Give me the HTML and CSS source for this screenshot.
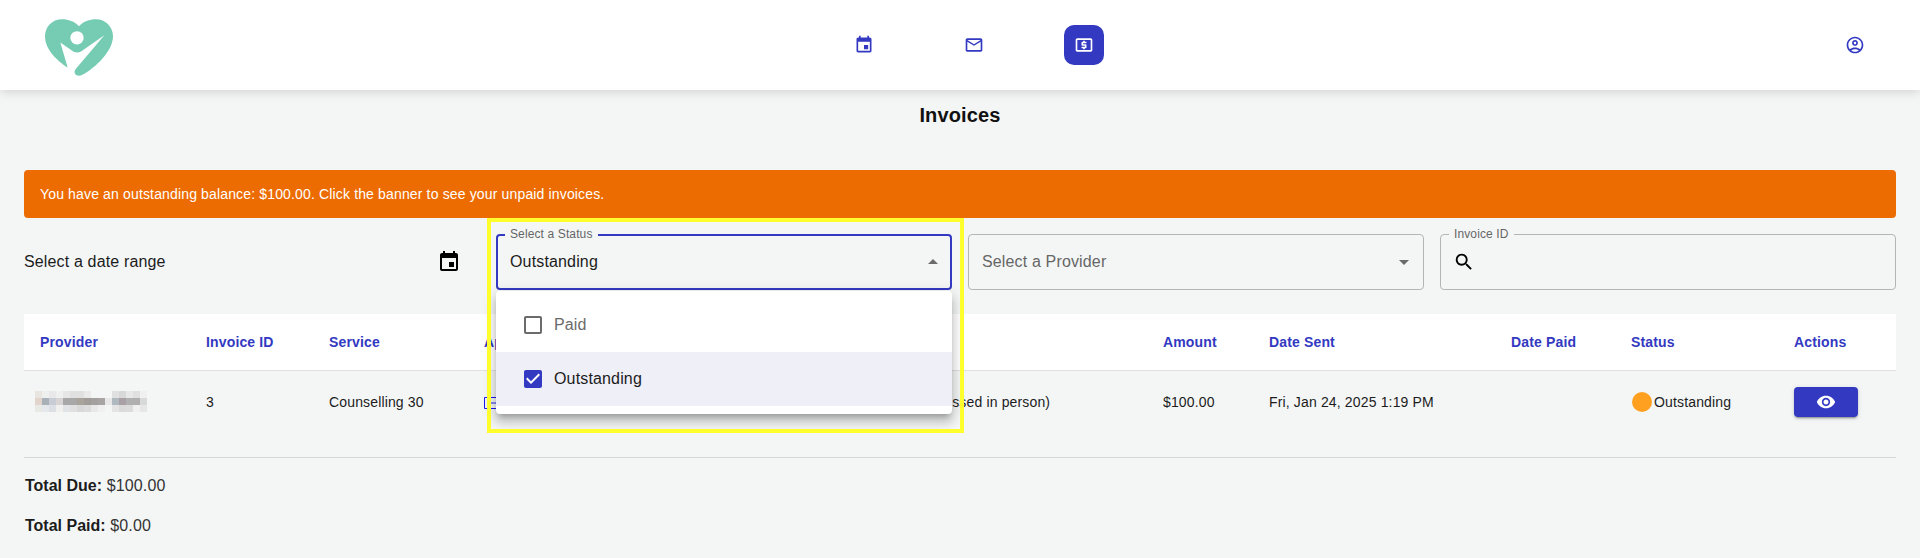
FILE: index.html
```html
<!DOCTYPE html>
<html lang="en">
<head>
<meta charset="utf-8">
<title>Invoices</title>
<link rel="stylesheet" href="styles.css">
</head>
<body>
<header class="topbar">
  <svg class="logo" viewBox="44 27 204 170" aria-label="Logo"><path fill="#76ccb3" d="M112 172C78 150 44 116 44 78C44 50 65 27 95 27C115 27 132 33 146 48C160 33 177 27 197 27C226 27 248 50 248 78C248 122 196 172 156 194C146 199 135 197 133 188C132 182 135 177 140 172L222 75L152 124C146 128 136 128 130 125L90 97Z"/><circle cx="140" cy="83" r="20" fill="#fff"/></svg>
  <nav class="nav">
    <span class="nav-btn"><svg class="icon20" viewBox="0 0 24 24"><path d="M17 12h-5v5h5v-5zM16 1v2H8V1H6v2H5c-1.11 0-1.99.9-1.99 2L3 19c0 1.1.89 2 2 2h14c1.1 0 2-.9 2-2V5c0-1.1-.9-2-2-2h-1V1h-2zm3 18H5V8h14v11z"/></svg></span>
    <span class="nav-btn"><svg class="icon20" viewBox="0 0 24 24"><path d="M20 4H4c-1.1 0-1.99.9-1.99 2L2 18c0 1.1.9 2 2 2h16c1.1 0 2-.9 2-2V6c0-1.1-.9-2-2-2zm0 14H4V8l8 5 8-5v10zm-8-7L4 6h16l-8 5z"/></svg></span>
    <span class="nav-btn nav-btn-active"><svg class="icon20" viewBox="0 0 24 24"><path d="M11 17h2v-1h1c.55 0 1-.45 1-1v-3c0-.55-.45-1-1-1h-3v-1h4V8h-2V7h-2v1h-1c-.55 0-1 .45-1 1v3c0 .55.45 1 1 1h3v1H9v2h2v1zm9-13H4c-1.11 0-1.99.89-1.99 2L2 18c0 1.11.89 2 2 2h16c1.11 0 2-.89 2-2V6c0-1.11-.89-2-2-2zm0 14H4V6h16v12z"/></svg></span>
  </nav>
  <span class="nav-btn"><svg class="icon20" viewBox="0 0 24 24"><path d="M12 2C6.48 2 2 6.48 2 12s4.48 10 10 10 10-4.48 10-10S17.52 2 12 2zM7.35 18.5C8.66 17.56 10.26 17 12 17s3.34.56 4.65 1.5c-1.31.94-2.91 1.5-4.65 1.5s-3.34-.56-4.65-1.5zm10.79-1.38C16.45 15.8 14.32 15 12 15s-4.45.8-6.14 2.12C4.7 15.73 4 13.95 4 12c0-4.42 3.58-8 8-8s8 3.58 8 8c0 1.95-.7 3.73-1.86 5.12zM12 6c-1.93 0-3.5 1.57-3.5 3.5S10.07 13 12 13s3.5-1.57 3.5-3.5S13.93 6 12 6zm0 5c-.83 0-1.5-.67-1.5-1.5S11.17 8 12 8s1.5.67 1.5 1.5S12.83 11 12 11z"/></svg></span>
</header>

<main class="page">
  <h1 class="title">Invoices</h1>
  <div class="banner">You have an outstanding balance: $100.00. Click the banner to see your unpaid invoices.</div>

  <section class="filters">
    <div class="date-range">
      <span>Select a date range</span>
      <svg class="icon24 icon-black" viewBox="0 0 24 24"><path d="M17 12h-5v5h5v-5zM16 1v2H8V1H6v2H5c-1.11 0-1.99.9-1.99 2L3 19c0 1.1.89 2 2 2h14c1.1 0 2-.9 2-2V5c0-1.1-.9-2-2-2h-1V1h-2zm3 18H5V8h14v11z"/></svg>
    </div>

    <div class="field field-focused">
      <span class="field-label">Select a Status</span>
      <span class="field-value">Outstanding</span>
      <svg class="icon24 icon-grey" viewBox="0 0 24 24"><path d="M7 14l5-5 5 5z"/></svg>
      <div class="menu">
        <div class="menu-item menu-item-muted">
          <svg class="icon24 icon-grey" viewBox="0 0 24 24"><path d="M19 5v14H5V5h14m0-2H5c-1.1 0-2 .9-2 2v14c0 1.1.9 2 2 2h14c1.1 0 2-.9 2-2V5c0-1.1-.9-2-2-2z"/></svg>
          <span>Paid</span>
        </div>
        <div class="menu-item menu-item-selected">
          <svg class="icon24 icon-primary" viewBox="0 0 24 24"><rect x="6" y="6" width="12" height="12" fill="#fff"/><path d="M19 3H5c-1.11 0-2 .9-2 2v14c0 1.1.89 2 2 2h14c1.11 0 2-.9 2-2V5c0-1.1-.89-2-2-2zm-9 14l-5-5 1.41-1.41L10 14.17l7.59-7.59L19 8l-9 9z"/></svg>
          <span>Outstanding</span>
        </div>
      </div>
      <div class="highlight"></div>
    </div>

    <div class="field">
      <span class="field-placeholder">Select a Provider</span>
      <svg class="icon24 icon-grey" viewBox="0 0 24 24"><path d="M7 10l5 5 5-5z"/></svg>
    </div>

    <div class="field field-search">
      <span class="field-label">Invoice ID</span>
      <svg class="icon22 icon-black" viewBox="0 0 24 24"><path d="M15.5 14h-.79l-.28-.27C15.41 12.59 16 11.11 16 9.5 16 5.91 13.09 3 9.5 3S3 5.91 3 9.5 5.91 16 9.5 16c1.61 0 3.09-.59 4.23-1.57l.27.28v.79l5 4.99L20.49 19l-4.99-5zm-6 0C7.01 14 5 11.99 5 9.5S7.01 5 9.5 5 14 7.01 14 9.5 11.99 14 9.5 14z"/></svg>
    </div>
  </section>

  <table class="invoices">
    <colgroup>
      <col class="c-provider"><col class="c-id"><col class="c-service"><col class="c-notes"><col class="c-amount"><col class="c-sent"><col class="c-paid"><col class="c-status"><col class="c-actions">
    </colgroup>
    <thead>
      <tr>
        <th>Provider</th><th>Invoice ID</th><th>Service</th><th>Appointment Details</th><th>Amount</th><th>Date Sent</th><th>Date Paid</th><th>Status</th><th>Actions</th>
      </tr>
    </thead>
    <tbody>
      <tr>
        <td>
          <svg class="blurred" viewBox="0 0 16 3" shape-rendering="crispEdges" aria-hidden="true">
            <rect x="0" y="0" width="1" height="1" fill="#e8e4e0"/><rect x="1" y="0" width="1" height="1" fill="#eef0f0"/><rect x="2" y="0" width="1" height="1" fill="#e8e8ea"/><rect x="3" y="0" width="1" height="1" fill="#eef0f0"/><rect x="4" y="0" width="1" height="1" fill="#e6e6e6"/><rect x="5" y="0" width="1" height="1" fill="#e0e0e0"/><rect x="6" y="0" width="1" height="1" fill="#e0e0e0"/><rect x="7" y="0" width="1" height="1" fill="#eaeaea"/><rect x="11" y="0" width="1" height="1" fill="#e0e0e0"/><rect x="12" y="0" width="1" height="1" fill="#d8d8d8"/><rect x="13" y="0" width="1" height="1" fill="#e8e8e8"/><rect x="14" y="0" width="1" height="1" fill="#e0e0e0"/><rect x="15" y="0" width="1" height="1" fill="#f0f0f0"/>
            <rect x="0" y="1" width="1" height="1" fill="#e0d4cc"/><rect x="1" y="1" width="1" height="1" fill="#a8b0b8"/><rect x="2" y="1" width="1" height="1" fill="#c8ccd4"/><rect x="3" y="1" width="1" height="1" fill="#d8d4d4"/><rect x="4" y="1" width="1" height="1" fill="#a8a8a8"/><rect x="5" y="1" width="1" height="1" fill="#a8a8a8"/><rect x="6" y="1" width="1" height="1" fill="#a8a49c"/><rect x="7" y="1" width="1" height="1" fill="#a09c98"/><rect x="8" y="1" width="1" height="1" fill="#a4a0a0"/><rect x="9" y="1" width="1" height="1" fill="#a8a4a4"/><rect x="10" y="1" width="1" height="1" fill="#e8e8e8"/><rect x="11" y="1" width="1" height="1" fill="#b0b8c0"/><rect x="12" y="1" width="1" height="1" fill="#a8a0a4"/><rect x="13" y="1" width="1" height="1" fill="#b0b0b0"/><rect x="14" y="1" width="1" height="1" fill="#b0aeae"/><rect x="15" y="1" width="1" height="1" fill="#d8dada"/>
            <rect x="0" y="2" width="1" height="1" fill="#e8e8e4"/><rect x="1" y="2" width="1" height="1" fill="#e4e8ec"/><rect x="2" y="2" width="1" height="1" fill="#dce0e4"/><rect x="3" y="2" width="1" height="1" fill="#f0f0ee"/><rect x="4" y="2" width="1" height="1" fill="#e0e4e6"/><rect x="5" y="2" width="1" height="1" fill="#e0e0e0"/><rect x="6" y="2" width="1" height="1" fill="#d8d8d8"/><rect x="7" y="2" width="1" height="1" fill="#dcdcdc"/><rect x="8" y="2" width="1" height="1" fill="#e8e8e8"/><rect x="9" y="2" width="1" height="1" fill="#f0f0f0"/><rect x="11" y="2" width="1" height="1" fill="#e4e4e4"/><rect x="12" y="2" width="1" height="1" fill="#dadada"/><rect x="13" y="2" width="1" height="1" fill="#dcdcdc"/><rect x="14" y="2" width="1" height="1" fill="#f0f0f0"/><rect x="15" y="2" width="1" height="1" fill="#e6e6e6"/>
          </svg>
        </td>
        <td>3</td>
        <td>Counselling 30</td>
        <td class="notes-cell"><svg class="notes-icon" viewBox="0 0 12 12" aria-hidden="true"><path d="M0.5 0.5H12M0.5 0.5V11.5H12M3 6H12" fill="none" stroke="#1a1af0" stroke-width="1"/></svg><span>Follow-up appointment for a counselling session (payment to be processed in person)</span></td>
        <td>$100.00</td>
        <td>Fri, Jan 24, 2025 1:19 PM</td>
        <td></td>
        <td><span class="status"><span class="status-dot"></span>Outstanding</span></td>
        <td><span class="view-btn"><svg class="icon20" viewBox="0 0 24 24"><path d="M12 4.5C7 4.5 2.73 7.61 1 12c1.73 4.39 6 7.5 11 7.5s9.27-3.11 11-7.5c-1.73-4.39-6-7.5-11-7.5zM12 17c-2.76 0-5-2.24-5-5s2.24-5 5-5 5 2.24 5 5-2.24 5-5 5zm0-8c-1.66 0-3 1.34-3 3s1.34 3 3 3 3-1.34 3-3-1.34-3-3-3z"/></svg></span></td>
      </tr>
    </tbody>
  </table>

  <hr class="divider">
  <p class="total"><strong>Total Due:</strong> $100.00</p>
  <p class="total"><strong>Total Paid:</strong> $0.00</p>
</main>
</body>
</html>
```

FILE: styles.css
```css
* { box-sizing: border-box; }

html, body {
  margin: 0;
  height: 100%;
  background: #f4f6f6;
  color: #1c1c1c;
  font-family: "Liberation Sans", Arial, sans-serif;
  font-size: 16px;
  overflow: hidden;
}

svg { display: block; fill: currentColor; }
.icon20 { width: 20px; height: 20px; }
.icon22 { width: 22px; height: 22px; flex: none; }
.icon24 { width: 24px; height: 24px; flex: none; }
.icon-black { color: #000; }
.icon-grey { color: #6b6b6b; }
.icon-primary { color: #3339c1; }

.topbar {
  height: 90px;
  padding: 0 45px;
  display: flex;
  align-items: center;
  justify-content: space-between;
  background: #fff;
  box-shadow: 0 2px 10px rgba(0, 0, 0, 0.14);
  position: relative;
  z-index: 2;
}

.logo { width: 68px; height: 57px; margin-top: 5px; }

.nav { display: flex; gap: 70px; }

.nav-btn {
  width: 40px;
  height: 40px;
  display: flex;
  align-items: center;
  justify-content: center;
  border-radius: 10px;
  color: #3339c1;
}

.nav-btn-active { background: #3339c1; color: #fff; }

.page { padding: 0 24px; }

.title {
  margin: 9px 0 39px;
  font-size: 20px;
  line-height: 32px;
  font-weight: 700;
  letter-spacing: 0.15px;
  text-align: center;
  color: #111;
}

.banner {
  height: 48px;
  padding: 0 16px;
  display: flex;
  align-items: center;
  background: #ed6c02;
  color: #fff;
  border-radius: 4px;
  font-size: 14px;
  letter-spacing: 0.15px;
}

.filters {
  margin-top: 16px;
  display: grid;
  grid-template-columns: repeat(4, 1fr);
  gap: 16px;
}

.date-range {
  height: 56px;
  display: flex;
  align-items: center;
  justify-content: space-between;
  padding-right: 19px;
  letter-spacing: 0.15px;
}

.field {
  position: relative;
  height: 56px;
  padding: 0 7px 0 13px;
  display: flex;
  align-items: center;
  justify-content: space-between;
  border: 1px solid #b5b5b5;
  border-radius: 4px;
  letter-spacing: 0.15px;
}

.field-focused {
  border: 2px solid #3339c1;
  padding: 0 5px 0 12px;
  z-index: 1;
}

.field-search { justify-content: flex-start; padding-left: 12px; }

.field-label {
  position: absolute;
  left: 8px;
  top: -8px;
  padding: 0 5px;
  background: #f4f6f6;
  font-size: 12px;
  line-height: 14px;
  color: #666;
  letter-spacing: 0.12px;
}

.field-focused .field-label { left: 7px; top: -9px; }

.field-value { color: #1c1c1c; }
.field-placeholder { color: #666; }

.menu {
  position: absolute;
  left: -2px;
  right: -2px;
  top: 55px;
  padding: 8px 0;
  background: #fff;
  border-radius: 4px;
  box-shadow: 0 5px 5px -3px rgba(0,0,0,.2), 0 8px 10px 1px rgba(0,0,0,.14), 0 3px 14px 2px rgba(0,0,0,.12);
}

.menu-item {
  height: 53px;
  padding-left: 25px;
  display: flex;
  align-items: center;
  gap: 9px;
}

.menu-item-muted { padding-bottom: 1px; color: #6b6b6b; }
.menu-item-selected { height: 54px; background: #efeff8; }

.highlight {
  position: absolute;
  left: -11px;
  top: -18px;
  width: 477px;
  height: 215px;
  border: 4px solid #ffff2e;
  pointer-events: none;
}

.invoices {
  width: 100%;
  margin-top: 24px;
  border-collapse: collapse;
  table-layout: fixed;
  font-size: 14px;
  letter-spacing: 0.15px;
}

.c-provider { width: 166px; }
.c-id { width: 123px; }
.c-service { width: 155px; }
.c-notes { width: 679px; }
.c-amount { width: 106px; }
.c-sent { width: 242px; }
.c-paid { width: 120px; }
.c-status { width: 163px; }
.c-actions { width: 118px; }

.invoices th {
  height: 56px;
  padding: 0 16px;
  background: #fff;
  border-bottom: 1px solid #e0e0e0;
  color: #3339c1;
  font-weight: 700;
  text-align: left;
  white-space: nowrap;
  overflow: hidden;
}

.invoices td {
  height: 63px;
  padding: 0 16px;
  white-space: nowrap;
}

.blurred { width: 112px; height: 21px; margin-left: -5px; }

.notes-cell span { margin-left: 11px; }
.notes-icon { display: inline-block; width: 12px; height: 12px; vertical-align: -2px; }

.status { display: flex; align-items: center; gap: 2px; margin-left: 1px; }
.status-dot { width: 20px; height: 20px; border-radius: 50%; background: #ffa021; }

.view-btn {
  width: 64px;
  height: 30px;
  display: flex;
  align-items: center;
  justify-content: center;
  background: #3339c1;
  color: #fff;
  border-radius: 4px;
  box-shadow: 0 3px 1px -2px rgba(0,0,0,.2), 0 2px 2px 0 rgba(0,0,0,.14), 0 1px 5px 0 rgba(0,0,0,.12);
}

.divider {
  height: 1px;
  margin: 24px 0 16px;
  border: 0;
  background: #d8d8d8;
}

.total {
  margin: 0 0 16px;
  padding-left: 1px;
  line-height: 24px;
  letter-spacing: 0.15px;
  color: #333;
}

.total strong { color: #1c1c1c; letter-spacing: 0; }
```
